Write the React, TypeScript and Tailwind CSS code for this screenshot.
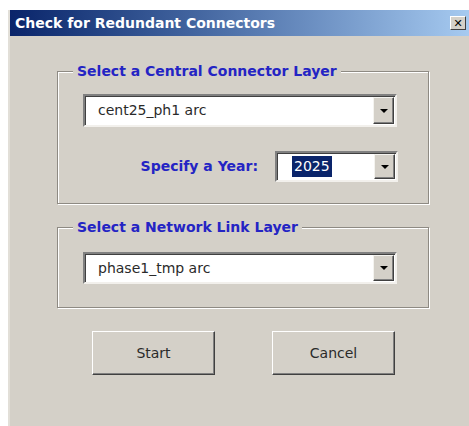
import type { ReactNode } from "react";

const FACE = "bg-[#d4d0c8]";

function Arrow() {
  return <span className="block w-0 h-0 border-x-[4px] border-t-[4px] border-x-transparent border-t-black" />;
}

function Combo({ children, className }: { children: ReactNode; className: string }) {
  return (
    <div
      className={
        "flex bg-white border-2 border-t-[#808080] border-l-[#808080] border-b-[#f2f0ec] border-r-[#f2f0ec] shadow-[inset_1px_1px_0_#404040] " +
        className
      }
    >
      <div className="flex flex-1 items-center pl-[13px] text-[14px] text-[#2a2a2a]">{children}</div>
      <div
        className={
          "flex w-[21px] my-[1px] mr-[1px] items-center justify-center border border-t-[#f4f3ef] border-l-[#f4f3ef] border-b-[#404040] border-r-[#404040] shadow-[inset_-1px_-1px_0_#808080] " +
          FACE
        }
      >
        <Arrow />
      </div>
    </div>
  );
}

function Group({ title, children, className }: { title: string; children: ReactNode; className: string }) {
  return (
    <div className={"relative border border-[#8e8a83] shadow-[inset_1px_1px_0_#fff,1px_1px_0_#fff] " + className}>
      <span className="absolute -top-[9px] left-[15px] bg-[#d4d0c8] px-[4px] text-[14px] font-bold leading-[16px] text-[#2424c4]">
        {title}
      </span>
      {children}
    </div>
  );
}

function Button({ label }: { label: string }) {
  return (
    <button
      className={
        "w-[123px] h-[44px] border border-t-white border-l-white border-b-[#404040] border-r-[#404040] shadow-[inset_-1px_-1px_0_#808080] text-[14px] text-[#2a2a2a] " +
        FACE
      }
    >
      {label}
    </button>
  );
}

export default function App() {
  return (
    <div className="w-[469px] h-[426px] overflow-hidden bg-white pt-[10px] pl-[8px] font-['DejaVu_Sans',sans-serif]">
      <div className={"flex flex-col h-[416px] border-l-2 border-[#e2dfd8] " + FACE}>
        {/* title bar */}
        <div className="flex h-[26px] items-center justify-between bg-gradient-to-r from-[#0a246a] to-[#a6caf0] pl-[5px] pr-[3px]">
          <span className="text-[14px] font-bold text-white">Check for Redundant Connectors</span>
          <span
            className={
              "flex w-[16px] h-[14px] items-center justify-center border border-t-white border-l-white border-b-[#404040] border-r-[#404040] text-[11px] font-bold leading-none text-black " +
              FACE
            }
          >
            ✕
          </span>
        </div>

        <div className="flex flex-col pt-[35px] pl-[47px]">
          <Group title="Select a Central Connector Layer" className="w-[372px] h-[133px] pt-[22px] pl-[25px]">
            <Combo className="w-[314px] h-[33px]">cent25_ph1 arc</Combo>
            <div className="flex items-center justify-end mt-[24px] pr-[30px]">
              <span className="mr-[17px] text-[14px] font-bold text-[#2424c4]">Specify a Year:</span>
              <Combo className="w-[123px] h-[31px]">
                <span className="ml-[2px] bg-[#0a246a] px-[2px] text-white">2025</span>
              </Combo>
            </div>
          </Group>

          <Group title="Select a Network Link Layer" className="mt-[23px] w-[372px] h-[81px] pt-[24px] pl-[25px]">
            <Combo className="w-[314px] h-[32px]">phase1_tmp arc</Combo>
          </Group>

          <div className="flex gap-[57px] mt-[23px] pl-[35px]">
            <Button label="Start" />
            <Button label="Cancel" />
          </div>
        </div>
      </div>
    </div>
  );
}
